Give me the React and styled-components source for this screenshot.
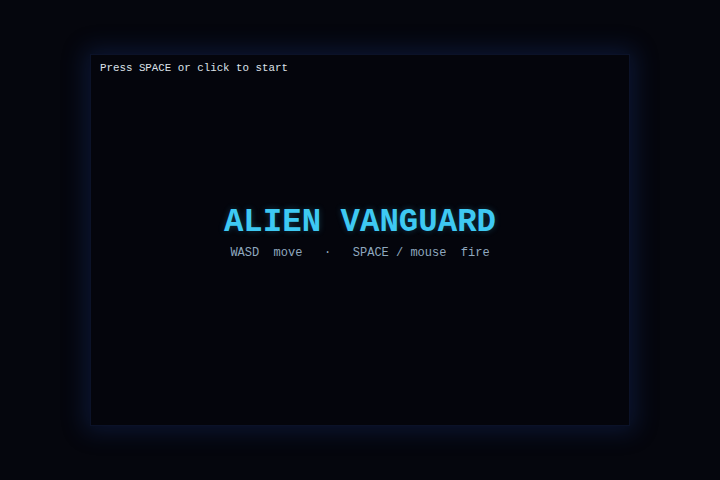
import styled, { createGlobalStyle } from "styled-components";

const GlobalStyle = createGlobalStyle`
  html, body {
    margin: 0;
    height: 100%;
    background: #05060d;
  }
  #root {
    height: 100%;
  }
`;

const Page = styled.div`
  height: 100%;
  display: flex;
  align-items: center;
  justify-content: center;
  font-family: "Liberation Mono", "DejaVu Sans Mono", monospace;
`;

const Stage = styled.div`
  width: 540px;
  height: 372px;
  box-sizing: border-box;
  background: #04050c;
  border: 1px solid #0b1228;
  box-shadow: 0 0 22px 5px rgba(28, 58, 140, 0.3);
  display: flex;
  flex-direction: column;
  padding: 6px 9px;
`;

const Hint = styled.div`
  color: #dde2ea;
  font-size: 10.8px;
  line-height: 14px;
`;

const Center = styled.div`
  flex: 1;
  display: flex;
  flex-direction: column;
  align-items: center;
  justify-content: center;
  padding-bottom: 28px;
`;

const Title = styled.h1`
  margin: 0;
  color: #3ec9f3;
  font-size: 32.4px;
  line-height: 36px;
  font-weight: bold;
  text-shadow: 0 0 6px rgba(62, 201, 243, 0.25);
`;

const Controls = styled.div`
  margin-top: 4px;
  color: #8fa8bf;
  font-size: 12px;
  line-height: 16px;
  white-space: pre;
`;

export default function App() {
  return (
    <Page>
      <GlobalStyle />
      <Stage>
        <Hint>Press SPACE or click to start</Hint>
        <Center>
          <Title>ALIEN VANGUARD</Title>
          <Controls>{"WASD  move   ·   SPACE / mouse  fire"}</Controls>
        </Center>
      </Stage>
    </Page>
  );
}
